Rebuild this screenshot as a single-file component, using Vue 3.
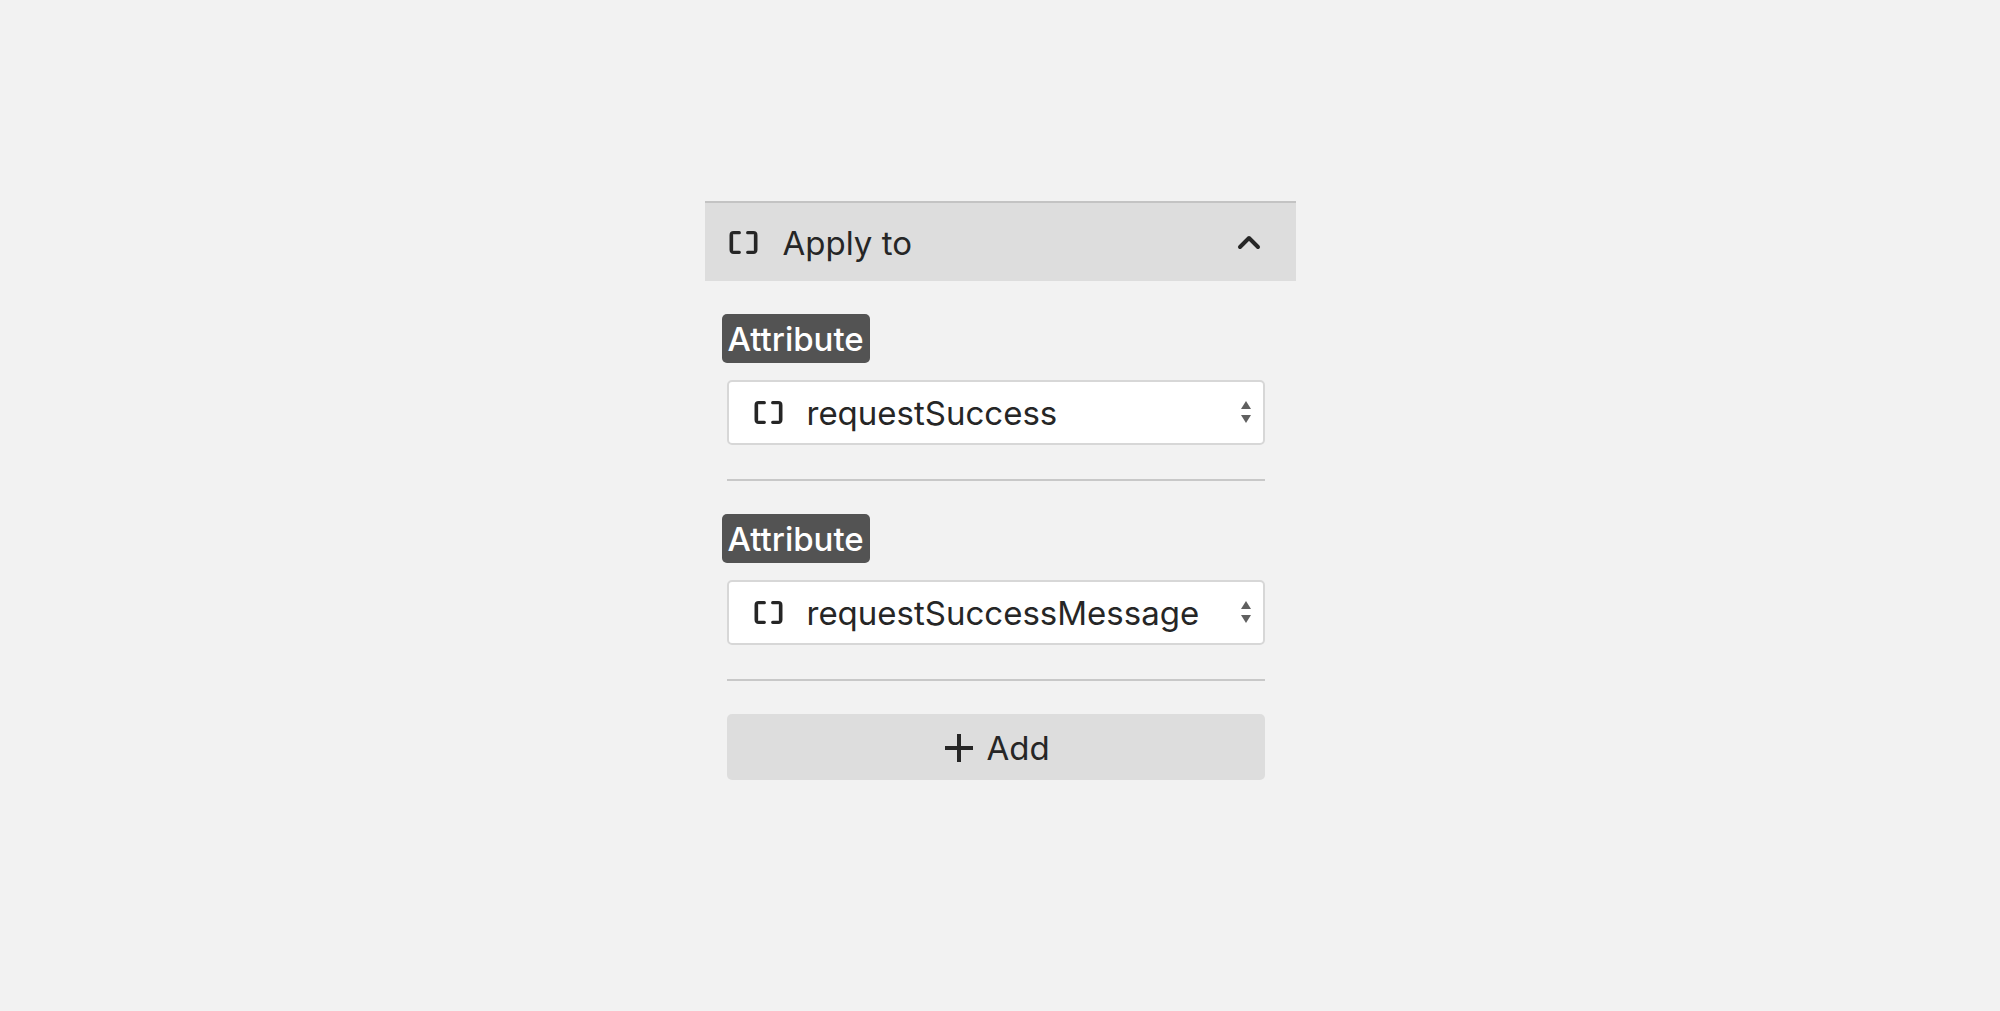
<script setup>
import { ref } from 'vue'

const open = ref(true)
const options = ['requestSuccess', 'requestSuccessMessage']
const attributes = ref([
  { id: 1, value: 'requestSuccess' },
  { id: 2, value: 'requestSuccessMessage' },
])
let nextId = 3

function add() {
  attributes.value.push({ id: nextId++, value: options[0] })
}
</script>

<template>
  <main class="page">
    <section class="panel">
      <button class="header" type="button" :aria-expanded="open" @click="open = !open">
        <svg class="brackets" viewBox="0 0 28 22" aria-hidden="true">
          <path d="M10 1.5H4.5Q2 1.5 2 4V18Q2 20.5 4.5 20.5H10M18 1.5H23.5Q26 1.5 26 4V18Q26 20.5 23.5 20.5H18" />
          <path d="M2.5 4V18M25.5 4V18" />
        </svg>
        <span class="title">Apply to</span>
        <svg class="chevron" :class="{ closed: !open }" viewBox="0 0 24 16" aria-hidden="true">
          <path d="M3 13L12 4L21 13" />
        </svg>
      </button>

      <div v-if="open" class="body">
        <div v-for="item in attributes" :key="item.id" class="field">
          <label class="badge" :for="`attribute-${item.id}`">Attribute</label>
          <div class="control">
            <select :id="`attribute-${item.id}`" v-model="item.value">
              <option v-for="name in options" :key="name" :value="name">{{ name }}</option>
            </select>
            <svg class="brackets lead" viewBox="0 0 28 22" aria-hidden="true">
              <path d="M10 1.5H4.5Q2 1.5 2 4V18Q2 20.5 4.5 20.5H10M18 1.5H23.5Q26 1.5 26 4V18Q26 20.5 23.5 20.5H18" />
              <path d="M2.5 4V18M25.5 4V18" />
            </svg>
            <svg class="arrows" viewBox="0 0 10 22" aria-hidden="true">
              <path d="M5 0L10 8H0ZM0 14H10L5 22Z" />
            </svg>
          </div>
        </div>

        <button class="add" type="button" @click="add">
          <svg class="plus" viewBox="0 0 28 28" aria-hidden="true">
            <path d="M14 0V28M0 14H28" />
          </svg>
          <span>Add</span>
        </button>
      </div>
    </section>
  </main>
</template>

<style>
body {
  background: #f2f2f2;
}
</style>

<style scoped>
.page {
  display: flex;
  justify-content: center;
  padding: 201px 16px 64px;
  color: #262626;
  font-family: Inter, "Liberation Sans", sans-serif;
  font-size: 33px;
  font-variant-ligatures: none;
  line-height: 40px;
}

.panel {
  flex: 0 1 591px;
  min-width: 0;
}

button,
select {
  box-sizing: border-box;
  width: 100%;
  margin: 0;
  color: inherit;
  font: inherit;
  cursor: pointer;
}

svg {
  flex: none;
  fill: none;
  stroke: currentColor;
}

.header {
  display: flex;
  align-items: center;
  height: 80px;
  padding: 0 35px 0 24px;
  border: 0;
  border-top: 2px solid #c3c3c3;
  background: #dddddd;
  text-align: left;
}

.title {
  flex: 1;
  margin-left: 25px;
  padding-top: 2px;
}

.brackets {
  width: 29px;
  height: 23px;
  stroke-width: 3;
  stroke-linecap: round;
}

.chevron {
  width: 24px;
  height: 16px;
  stroke-width: 4;
  stroke-linecap: round;
  stroke-linejoin: round;
}

.chevron.closed {
  transform: rotate(180deg);
}

.body {
  padding: 33px 31px 0 22px;
}

.field {
  display: flex;
  flex-direction: column;
  align-items: flex-start;
  margin-bottom: 33px;
  padding-bottom: 34px;
  border-bottom: 2px solid #c8c8c8;
}

.badge {
  margin: 0 0 17px -5px;
  padding: 5px 6px 4px;
  border-radius: 5px;
  background: #535353;
  color: #ffffff;
  font-weight: 500;
}

.control {
  position: relative;
  width: 100%;
}

select {
  display: block;
  height: 65px;
  padding: 0 40px 0 78px;
  border: 2px solid #d7d7d7;
  border-radius: 5px;
  background: #ffffff;
  appearance: none;
}

.lead,
.arrows {
  position: absolute;
  top: 21px;
  pointer-events: none;
}

.lead {
  left: 27px;
}

.arrows {
  right: 14px;
  width: 10px;
  height: 22px;
  fill: #606060;
  stroke: none;
}

.add {
  display: flex;
  align-items: center;
  justify-content: center;
  gap: 13px;
  height: 66px;
  padding: 2px 0 0 4px;
  border: 0;
  border-radius: 5px;
  background: #dddddd;
}

.plus {
  width: 28px;
  height: 28px;
  stroke-width: 4;
}
</style>
